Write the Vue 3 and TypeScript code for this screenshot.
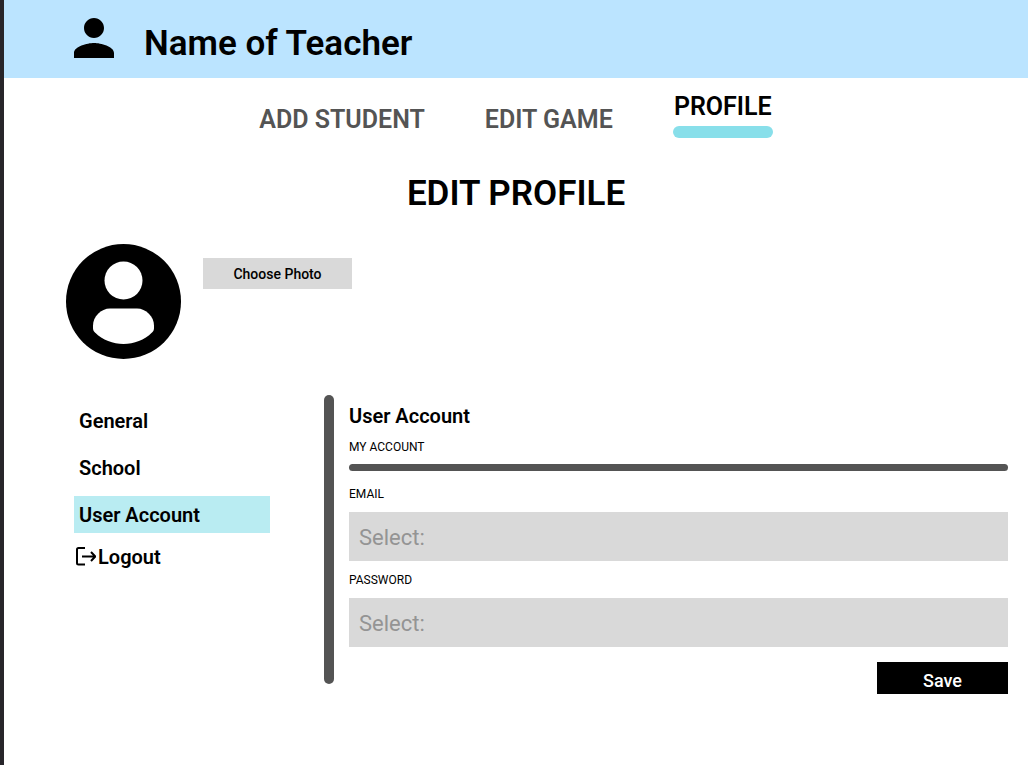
<script setup lang="ts">
import { ref } from 'vue'

interface Field {
  id: string
  label: string
  type: string
}

const tabs: string[] = ['ADD STUDENT', 'EDIT GAME', 'PROFILE']
const activeTab = ref<string>('PROFILE')

const sections: string[] = ['General', 'School', 'User Account']
const activeSection = ref<string>('User Account')

const fields: Field[] = [
  { id: 'email', label: 'EMAIL', type: 'email' },
  { id: 'password', label: 'PASSWORD', type: 'password' },
]
const values = ref<Record<string, string>>({ email: '', password: '' })
</script>

<template>
  <div class="page">
    <header class="banner">
      <svg class="person" viewBox="4 4 16 16" aria-hidden="true">
        <path d="M12 12c2.21 0 4-1.79 4-4s-1.79-4-4-4-4 1.79-4 4 1.79 4 4 4zm0 2c-2.67 0-8 1.34-8 4v2h16v-2c0-2.66-5.33-4-8-4z" />
      </svg>
      <span class="teacher">Name of Teacher</span>
    </header>

    <nav class="tabs" aria-label="Main">
      <a
        v-for="tab in tabs"
        :key="tab"
        href="#"
        class="tab"
        :class="{ active: tab === activeTab }"
        @click.prevent="activeTab = tab"
      >{{ tab }}</a>
    </nav>

    <main>
      <h1>EDIT PROFILE</h1>

      <section class="photo">
        <svg class="avatar" viewBox="0 0 115 115" aria-hidden="true">
          <circle cx="57.5" cy="57.5" r="57.5" />
          <circle class="cut" cx="57.5" cy="36.5" r="19" />
          <path class="cut" d="M44 64.5H71C80 64.5 88 72.5 88 81.5V84C88 86 87.5 87 86 88.5C78.5 96 68 100 57.5 100C47 100 36.5 96 29 88.5C27.5 87 27 86 27 84V81.5C27 72.5 35 64.5 44 64.5Z" />
        </svg>
        <button type="button" class="choose">Choose Photo</button>
      </section>

      <div class="columns">
        <nav class="side" aria-label="Settings">
          <a
            v-for="section in sections"
            :key="section"
            href="#"
            class="item"
            :class="{ active: section === activeSection }"
            @click.prevent="activeSection = section"
          >{{ section }}</a>
          <a href="#" class="logout" @click.prevent>
            <svg class="exit" viewBox="0 0 22 20" aria-hidden="true">
              <path d="M11 1H4.5Q3 1 3 2.5V16Q3 17.5 4.5 17.5H11M8 9.5H21M17 5L21.3 9.500L17 14" />
            </svg>
            <span>Logout</span>
          </a>
        </nav>

        <form class="account" @submit.prevent>
          <h2>User Account</h2>
          <p class="caption">MY ACCOUNT</p>
          <hr />
          <div v-for="field in fields" :key="field.id" class="field">
            <label :for="field.id" class="caption">{{ field.label }}</label>
            <input :id="field.id" v-model="values[field.id]" :type="field.type" placeholder="Select:" />
          </div>
          <button type="submit" class="save">Save</button>
        </form>
      </div>
    </main>
  </div>
</template>

<style>
body {
  margin: 0;
  background: #fff;
}
</style>

<style scoped>
.page {
  box-sizing: border-box;
  min-height: 100vh;
  border-left: 4px solid #27252a;
  background: #fff;
  color: #000;
  font-family: Roboto, 'Liberation Sans', sans-serif;
}

a {
  color: inherit;
  text-decoration: none;
}

button,
input {
  border: 0;
  border-radius: 0;
  font-family: inherit;
}

button {
  cursor: pointer;
}

.banner {
  display: flex;
  align-items: flex-start;
  gap: 30px;
  box-sizing: border-box;
  height: 78px;
  padding: 18px 70px 0;
  background: #bbe4ff;
}

.person {
  width: 40px;
  height: 40px;
}

.teacher {
  font-size: 35px;
  font-weight: 600;
  line-height: 52px;
}

.tabs {
  display: flex;
  justify-content: center;
  align-items: center;
  gap: 60px;
  height: 78px;
}

.tab {
  padding-top: 6px;
  color: #545454;
  font-size: 25px;
  font-weight: 600;
  line-height: 30px;
}

.tab.active {
  padding: 0 0 4px;
  color: #000;
  text-align: center;
}

.tab.active::after {
  display: block;
  min-width: 100px;
  height: 12px;
  margin-top: 4px;
  border-radius: 6px;
  background: #88dfea;
  content: '';
}

h1 {
  margin: 17px 0 0;
  font-size: 35px;
  font-weight: 600;
  line-height: 42px;
  text-align: center;
}

.photo {
  display: flex;
  align-items: flex-start;
  gap: 22px;
  margin: 29px 62px 0;
}

.avatar {
  width: 115px;
  height: 115px;
}

.cut {
  fill: #fff;
}

.choose {
  width: 149px;
  height: 31px;
  margin-top: 14px;
  padding: 1px 0 0;
  background: #d9d9d9;
  color: #000;
  font-size: 14px;
  font-weight: 500;
}

.columns {
  display: grid;
  grid-template-columns: 196px 1fr;
  column-gap: 54px;
  margin: 36px 20px 0 70px;
}

.side {
  display: flex;
  flex-direction: column;
  gap: 10px;
  padding-top: 7px;
  font-size: 20px;
  font-weight: 600;
}

.item {
  padding: 1px 5px 0;
  line-height: 36px;
}

.item.active {
  background: #b9ecf2;
}

.logout {
  display: flex;
  align-items: center;
  gap: 2px;
  line-height: 28px;
}

.exit {
  width: 22px;
  height: 20px;
  fill: none;
  stroke: #000;
  stroke-width: 2;
}

.account {
  display: flex;
  flex-direction: column;
  position: relative;
  padding: 8px 0 0 25px;
}

.account::before {
  position: absolute;
  top: 0;
  left: 0;
  width: 10px;
  height: 289px;
  border-radius: 5px;
  background: #545454;
  content: '';
}

h2 {
  margin: 0;
  font-size: 20px;
  font-weight: 600;
  line-height: 26px;
}

.caption {
  margin: 0;
  font-size: 12px;
  line-height: 16px;
}

p.caption {
  margin-top: 10px;
}

hr {
  width: 100%;
  height: 7px;
  margin: 9px 0 7px;
  border: 0;
  border-radius: 4px;
  background: #545454;
}

.field {
  display: flex;
  flex-direction: column;
  gap: 10px;
  padding-top: 8px;
}

.field + .field {
  padding-top: 11px;
}

.field input {
  box-sizing: border-box;
  width: 100%;
  height: 49px;
  padding: 1px 10px 0;
  background: #d9d9d9;
  color: #000;
  font-size: 22px;
}

.field input::placeholder {
  color: #949494;
  opacity: 1;
}

.save {
  align-self: flex-end;
  width: 131px;
  height: 32px;
  margin-top: 15px;
  padding: 6px 0 0;
  background: #000;
  color: #fff;
  font-size: 18px;
  font-weight: 500;
  line-height: 26px;
}
</style>
